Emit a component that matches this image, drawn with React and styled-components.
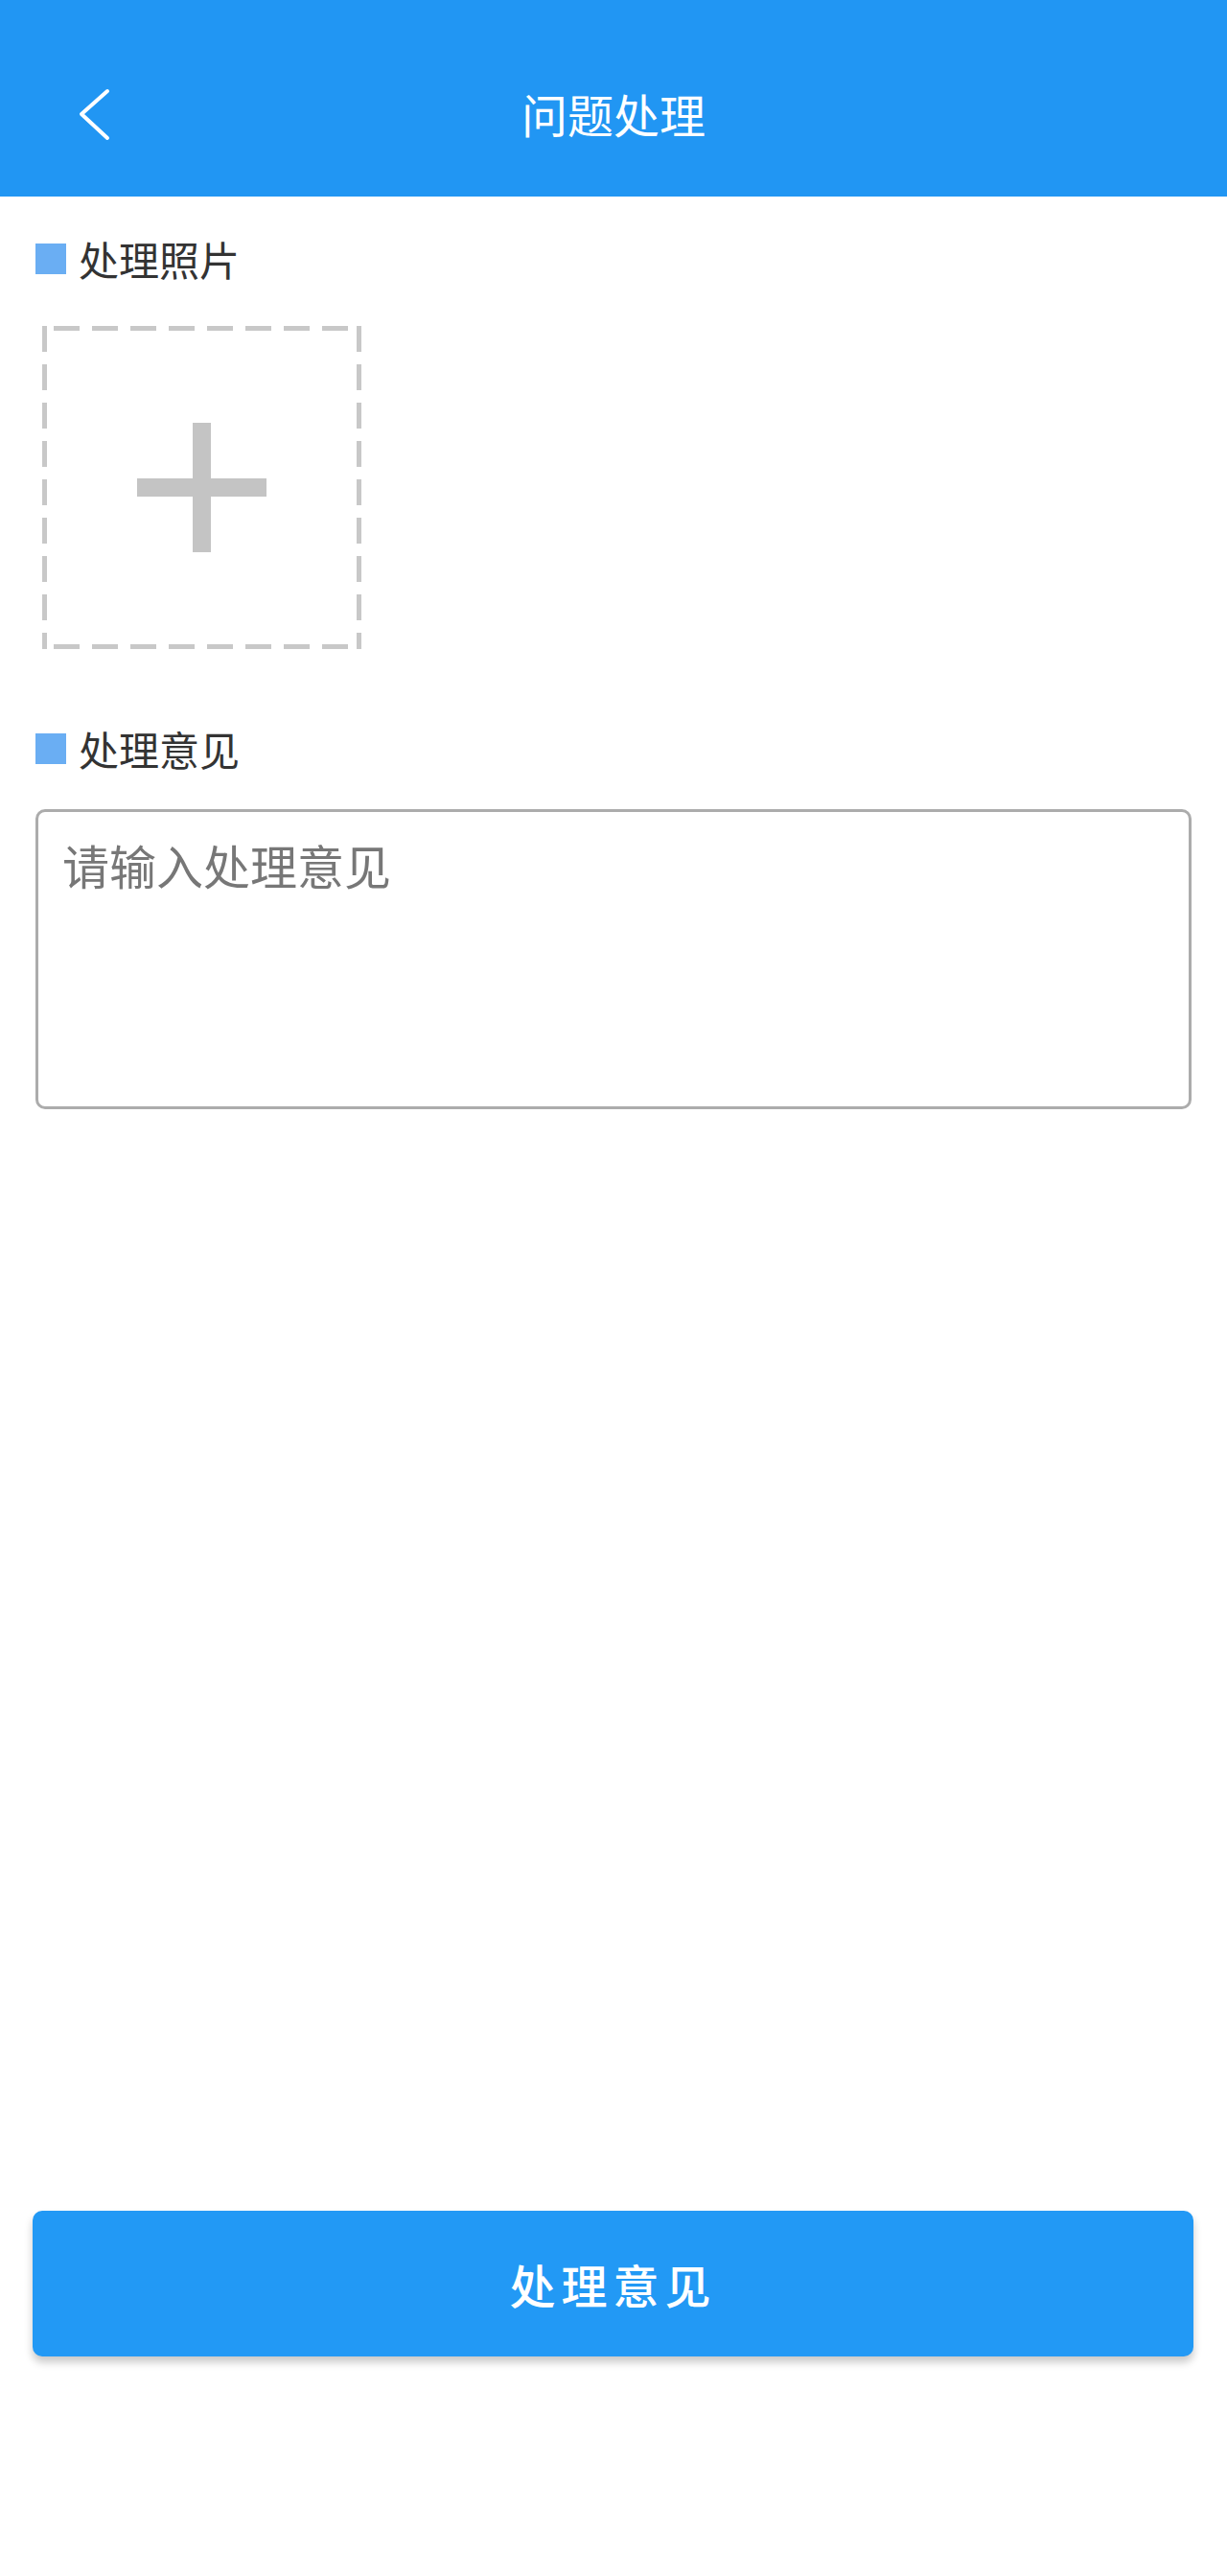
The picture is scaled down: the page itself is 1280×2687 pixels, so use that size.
import React from 'react'
import styled, { createGlobalStyle } from 'styled-components'

const GlobalStyle = createGlobalStyle`
  * { box-sizing: border-box; }
  body {
    margin: 0;
    background: #ffffff;
    font-family: "Noto Sans CJK SC", "Noto Sans", sans-serif;
  }
`

const Page = styled.div`
  min-height: 100vh;
  display: flex;
  flex-direction: column;
  background: #ffffff;
`

const Header = styled.header`
  height: 205px;
  padding-top: 32px;
  background: #2196f3;
  display: grid;
  grid-template-columns: 1fr auto 1fr;
  align-items: center;
`

const BackButton = styled.button`
  justify-self: start;
  margin-left: 80px;
  width: 40px;
  height: 60px;
  padding: 0;
  border: none;
  background: transparent;
  display: flex;
  align-items: center;
  justify-content: center;
`

const Title = styled.h1`
  margin: 0;
  color: #ffffff;
  font-size: 48px;
  font-weight: 400;
  line-height: 1.2;
`

const Content = styled.main`
  flex: 1;
  padding: 0 37px;
  display: flex;
  flex-direction: column;
`

const SectionTitle = styled.div`
  margin-top: ${p => p.top}px;
  height: 40px;
  display: flex;
  align-items: center;
  gap: 13px;
  color: #333333;
  font-size: 42px;
  line-height: 40px;
`

const Mark = styled.span`
  width: 32px;
  height: 32px;
  background: #6aaef3;
`

const UploadBox = styled.div`
  margin-top: 50px;
  margin-left: 7px;
  width: 333px;
  height: 337px;
  display: flex;
  align-items: center;
  justify-content: center;
  background-image:
    repeating-linear-gradient(90deg, #c8c8c8 0 27px, transparent 27px 40px),
    repeating-linear-gradient(90deg, #c8c8c8 0 27px, transparent 27px 40px),
    repeating-linear-gradient(180deg, #c8c8c8 0 27px, transparent 27px 40px),
    repeating-linear-gradient(180deg, #c8c8c8 0 27px, transparent 27px 40px);
  background-size: 100% 5px, 100% 5px, 5px 100%, 5px 100%;
  background-position: 12px 0, 12px 100%, 0 0, 100% 0;
  background-repeat: no-repeat;
`

const Plus = styled.div`
  position: relative;
  width: 135px;
  height: 135px;

  &::before, &::after {
    content: '';
    position: absolute;
    background: #c4c4c4;
  }
  &::before {
    left: 0;
    right: 0;
    top: 58px;
    height: 19px;
  }
  &::after {
    top: 0;
    bottom: 0;
    left: 58px;
    width: 19px;
  }
`

const Opinion = styled.textarea`
  margin-top: 43px;
  width: 100%;
  height: 313px;
  padding: 26px 25px;
  border: 3px solid #acacac;
  border-radius: 10px;
  resize: none;
  outline: none;
  font-family: "Noto Sans CJK SC", "Noto Sans", sans-serif;
  font-size: 49px;
  line-height: 1.2;
  color: #333333;

  &::placeholder {
    color: #777777;
  }
`

const Footer = styled.div`
  padding: 0 35px 229px 34px;
`

const SubmitButton = styled.button`
  width: 100%;
  height: 152px;
  border: none;
  border-radius: 10px;
  background: #2299f5;
  box-shadow: 0 6px 8px rgba(0, 0, 0, 0.22);
  color: #ffffff;
  font-family: "Noto Sans CJK SC", "Noto Sans", sans-serif;
  font-size: 48px;
  font-weight: 500;
  letter-spacing: 6px;
  padding-left: 6px;
`

const App = () => {
  return (
    <Page>
      <GlobalStyle />
      <Header>
        <BackButton aria-label="back">
          <svg width="40" height="60" viewBox="0 0 40 60">
            <polyline points="32,6 5,30 32,55" fill="none" stroke="#ffffff" strokeWidth="4" strokeLinecap="round" strokeLinejoin="round" />
          </svg>
        </BackButton>
        <Title>问题处理</Title>
        <span />
      </Header>

      <Content>
        <SectionTitle top={45}>
          <Mark />
          处理照片
        </SectionTitle>
        <UploadBox>
          <Plus />
        </UploadBox>

        <SectionTitle top={84}>
          <Mark />
          处理意见
        </SectionTitle>
        <Opinion placeholder="请输入处理意见" />
      </Content>

      <Footer>
        <SubmitButton>处理意见</SubmitButton>
      </Footer>
    </Page>
  )
}

export default App
